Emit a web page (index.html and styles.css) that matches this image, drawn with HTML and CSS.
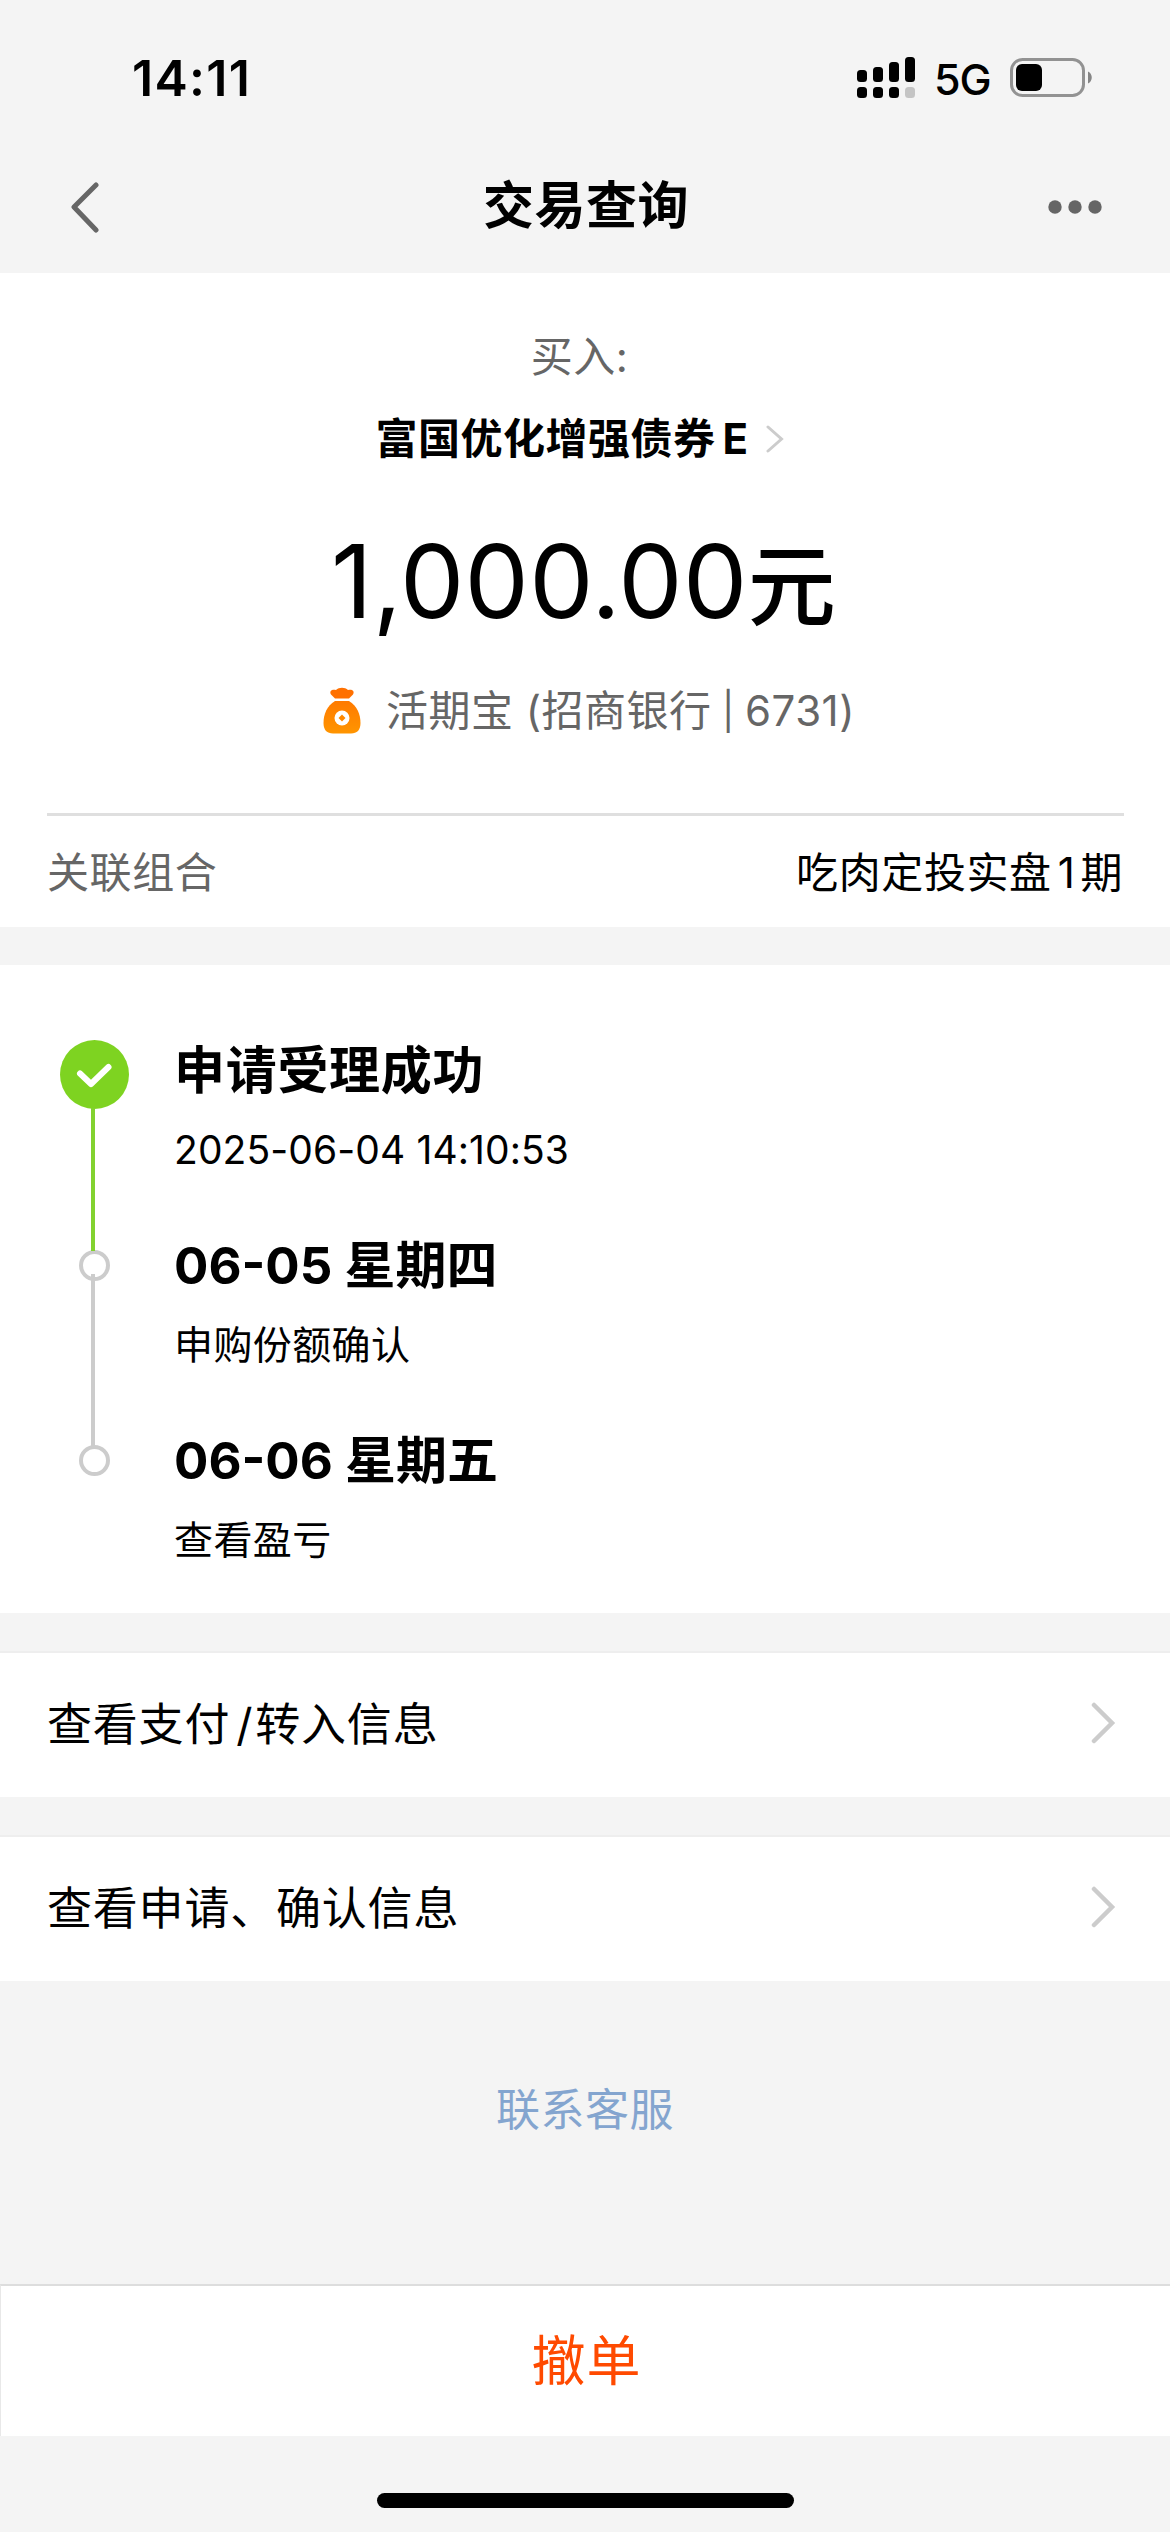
FILE: index.html
```html
<!DOCTYPE html>
<html lang="zh-CN">
<head>
    <meta charset="UTF-8">
    <meta name="viewport" content="width=device-width, initial-scale=1.0">
    <title>交易查询</title>
    <link rel="stylesheet" href="styles.css">
</head>
<body>

    <div class="status-bar">
        <span class="time">14:11</span>
        <div class="status-right">
            <svg class="signal" width="58" height="42" viewBox="0 0 58 42">
                <rect x="0" y="13" width="10" height="12" rx="3.5"/>
                <rect x="16" y="10" width="10" height="15" rx="3.5"/>
                <rect x="32" y="5" width="10" height="20" rx="3.5"/>
                <rect x="48" y="0" width="10" height="25" rx="3.5"/>
                <rect x="0" y="30" width="10" height="11" rx="3.5"/>
                <rect x="16" y="30" width="10" height="11" rx="3.5"/>
                <rect x="32" y="30" width="10" height="11" rx="3.5"/>
                <rect x="48" y="30" width="10" height="11" rx="3.5" fill="#c4c4c4"/>
            </svg>
            <span class="network">5G</span>
            <svg class="battery" width="83" height="40" viewBox="0 0 83 40">
                <rect x="1.5" y="1.5" width="72" height="36" rx="11" fill="none" stroke="#929292" stroke-width="3"/>
                <rect x="6" y="6" width="26" height="27" rx="6"/>
                <path d="M78 13.5c5 2 5 10 0 12z" fill="#858585"/>
            </svg>
        </div>
    </div>

    <header class="navbar">
        <svg class="back" width="30" height="52" viewBox="0 0 30 52">
            <path d="M26 4L4 26L26 49" fill="none" stroke="#666" stroke-width="5" stroke-linecap="round" stroke-linejoin="round"/>
        </svg>
        <h1>交易查询</h1>
        <svg class="more" width="56" height="14" viewBox="0 0 56 14" fill="#666">
            <circle cx="8" cy="7" r="6.7"/>
            <circle cx="28" cy="7" r="6.7"/>
            <circle cx="48" cy="7" r="6.7"/>
        </svg>
    </header>

    <section class="summary">
        <p class="label">买入:</p>
        <p class="fund">
            富国优化增强债券<span class="fund-class">E</span>
            <svg width="18" height="28" viewBox="0 0 18 28">
                <path d="M2 2L15.500 14L2 26" fill="none" stroke="#ccc" stroke-width="3" stroke-linecap="round"/>
            </svg>
        </p>
        <p class="amount">1,000.00<span class="unit">元</span></p>
        <p class="pay">
            <svg width="38" height="48" viewBox="0 0 38 48">
                <defs>
                    <linearGradient id="bag" x1="0" y1="0" x2="0" y2="1">
                        <stop offset="0" stop-color="#ff7a00"/>
                        <stop offset="1" stop-color="#ff9500"/>
                    </linearGradient>
                </defs>
                <path d="M12 11.500L8 7.500C6 4 9 2 13 3C16 0 22 0 25 3C29 2 32 4 30 7.500L26 11.500Z" fill="#ff7000"/>
                <path d="M12 14H26C34 19 37.500 27 37.500 36C37.500 43 34 46.500 28 46.500H10C4 46.500 0.500 43 0.500 36C0.500 27 4 19 12 14Z" fill="url(#bag)"/>
                <circle cx="19" cy="31" r="7.500" fill="#fff"/>
                <path d="M19 27.500L22.500 31L19 34.500L15.500 31Z" fill="#ff8800"/>
            </svg>
            <span>活期宝 (招商银行 <span class="bar">|</span> 6731)</span>
        </p>
        <div class="portfolio">
            <span class="portfolio-label">关联组合</span>
            <span class="portfolio-name">吃肉定投实盘<span class="num">1</span>期</span>
        </div>
    </section>

    <section class="timeline">
        <div class="step done">
            <div class="marker">
                <svg width="69" height="69" viewBox="0 0 69 69">
                    <circle cx="34.500" cy="34.500" r="34.500" fill="#7ed321"/>
                    <path d="M20 33.500L31 44L48.500 27" fill="none" stroke="#fff" stroke-width="6" stroke-linecap="round" stroke-linejoin="round"/>
                </svg>
                <div class="line"></div>
            </div>
            <div class="step-text">
                <h2>申请受理成功</h2>
                <p>2025-06-04 14:10:53</p>
            </div>
        </div>
        <div class="step">
            <div class="marker">
                <div class="ring"></div>
                <div class="line"></div>
            </div>
            <div class="step-text">
                <h2>06-05 星期四</h2>
                <p>申购份额确认</p>
            </div>
        </div>
        <div class="step">
            <div class="marker">
                <div class="ring"></div>
            </div>
            <div class="step-text">
                <h2>06-06 星期五</h2>
                <p>查看盈亏</p>
            </div>
        </div>
    </section>

    <a class="link-row">
        <span>查看支付<span class="slash">/</span>转入信息</span>
        <svg width="25" height="42" viewBox="0 0 25 42">
            <path d="M3 3L21 21L3 39" fill="none" stroke="#ccc" stroke-width="4.500" stroke-linecap="round"/>
        </svg>
    </a>
    <a class="link-row">
        <span>查看申请、确认信息</span>
        <svg width="25" height="42" viewBox="0 0 25 42">
            <path d="M3 3L21 21L3 39" fill="none" stroke="#ccc" stroke-width="4.500" stroke-linecap="round"/>
        </svg>
    </a>

    <a class="service">联系客服</a>

    <button class="cancel">撤单</button>

    <div class="home-indicator"></div>

</body>
</html>
```

FILE: styles.css
```css
* {
    box-sizing: border-box;
}

body {
    font-family: Inter, "Noto Sans CJK SC", sans-serif;
    background-color: #f4f4f4;
    color: #000;
    margin: 0;
    height: 2532px;
    display: flex;
    flex-direction: column;
}

h1, h2, p {
    margin: 0;
}

svg {
    display: block;
    flex: none;
}

/* Status bar */
.status-bar {
    height: 156px;
    padding: 0 77px 0 132px;
    display: flex;
    align-items: center;
    justify-content: space-between;
}

.time {
    font-size: 50px;
    font-weight: 600;
    letter-spacing: 1.3px;
}

.status-right {
    display: flex;
    align-items: center;
}

.network {
    font-size: 43px;
    font-weight: 500;
    margin: 2px 21px 0 19px;
    width: 55px;
    letter-spacing: -1px;
}

/* Navbar */
.navbar {
    height: 117px;
    padding: 0 67px 16px 70px;
    display: flex;
    align-items: center;
    justify-content: space-between;
}

.navbar h1 {
    font-size: 51px;
    font-weight: 700;
    line-height: 60px;
    letter-spacing: 0.5px;
    margin: -2px 0 0 25px;
}

/* Summary */
.summary {
    background-color: #fff;
    height: 654px;
    padding: 54px 46px 0 47px;
}

.label, .pay, .fund {
    font-size: 42px;
    line-height: 60px;
    letter-spacing: 0.5px;
}

.label {
    color: #666;
    text-align: center;
    padding-right: 12px;
}

.fund {
    display: flex;
    align-items: center;
    justify-content: center;
    font-weight: 700;
    margin-top: 22px;
    padding-right: 12px;
}

.fund-class {
    margin: 0 17px 0 7px;
}

.amount {
    display: flex;
    align-items: baseline;
    justify-content: center;
    font-size: 102px;
    line-height: 120px;
    letter-spacing: 0.3px;
    height: 120px;
    margin-top: 52px;
    padding-right: 4px;
}

.unit {
    font-size: 88px;
    font-weight: 500;
}

.pay {
    display: flex;
    align-items: center;
    justify-content: center;
    gap: 25px;
    color: #666;
    margin-top: 40px;
    padding-left: 7px;
}

.bar {
    font-size: 37px;
    margin: 0 -2px;
    vertical-align: 2px;
    line-height: 1;
}

.portfolio {
    display: flex;
    align-items: center;
    justify-content: space-between;
    height: 114px;
    margin-top: 72px;
    border-top: 3px solid #dfdfdf;
    padding: 0 1px 5px 0;
    font-size: 42px;
    letter-spacing: 0.6px;
}

.portfolio-label {
    color: #666;
}

.num {
    margin: 0 5px 0 6px;
}

/* Timeline */
.timeline {
    background-color: #fff;
    height: 648px;
    margin-top: 38px;
    padding: 75px 60px 0;
}

.step {
    display: flex;
    height: 195px;
}

.marker {
    width: 69px;
    display: flex;
    flex-direction: column;
    align-items: center;
}

.ring {
    width: 31px;
    height: 31px;
    margin-top: 15px;
    border: 4px solid #ccc;
    border-radius: 50%;
    flex: none;
}

.line {
    flex: 1;
    width: 4px;
    margin: -7px 3px -16px 0;
    background-color: #ccc;
    z-index: 1;
}

.done .line {
    margin-top: -1px;
    background-color: #82d22f;
}

.step-text {
    margin-left: 45px;
}

.step-text h2 {
    font-size: 51px;
    font-weight: 700;
    line-height: 62px;
}

.done h2 {
    letter-spacing: 0.7px;
}

.step-text p {
    font-size: 39px;
    line-height: 56px;
    letter-spacing: 0.4px;
    margin-top: 20px;
}

.done .step-text p {
    letter-spacing: 0.1px;
}

/* Link rows */
.link-row {
    background-color: #fff;
    height: 146px;
    margin-top: 38px;
    padding: 0 54px 4px 47px;
    border-top: 2px solid #eee;
    display: flex;
    align-items: center;
    justify-content: space-between;
    font-size: 45px;
    letter-spacing: 0.8px;
}

.link-row > span {
    padding-bottom: 3px;
}

.slash {
    margin: 0 2px 0 6px;
}

.service {
    margin-top: 96px;
    text-align: center;
    font-size: 44px;
    line-height: 66px;
    letter-spacing: 0.5px;
    color: #84a5cf;
}

/* Footer */
.cancel {
    font-family: inherit;
    font-size: 54px;
    letter-spacing: 1px;
    color: #ff4a00;
    background-color: #fff;
    border: none;
    border-top: 2px solid #ddd;
    border-left: 1px solid #e8e8e8;
    height: 152px;
    margin-top: 141px;
    padding: 0 0 8px 2px;
}

.home-indicator {
    width: 417px;
    height: 15px;
    margin: 57px auto 0;
    border-radius: 8px;
    background-color: #000;
}
```
